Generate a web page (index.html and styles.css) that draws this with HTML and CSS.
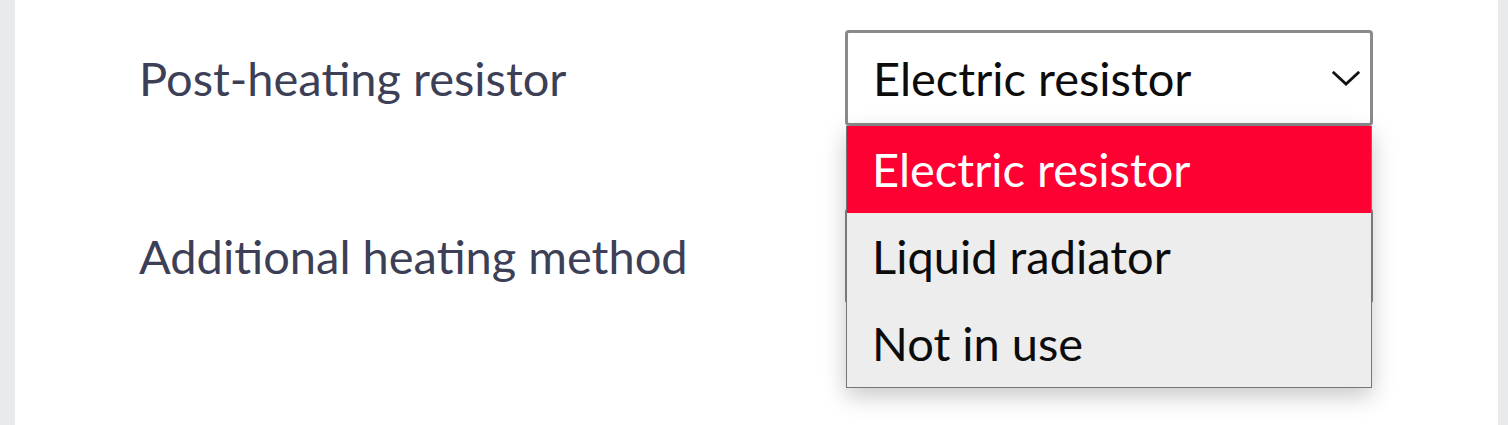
FILE: index.html
```html
<!DOCTYPE html>
<html lang="en">
<head>
<meta charset="utf-8">
<title>Heating settings</title>
<link rel="stylesheet" href="styles.css">
</head>
<body>
<div class="page">
  <div class="gutter gutter-left"></div>
  <main class="content">
    <div class="form">
      <div class="row">
        <div class="label">Post-heating resistor</div>
        <div class="field">
          <div class="select">
            <span class="select-value">Electric resistor</span>
            <svg class="chevron" width="28" height="15" viewBox="0 0 28 15"><path d="M1.8 1.8 L14 13 L26.2 1.8" fill="none" stroke="#111" stroke-width="2.8" stroke-linecap="square" stroke-linejoin="miter"/></svg>
          </div>
          <ul class="menu">
            <li class="option selected">Electric resistor</li>
            <li class="option">Liquid radiator</li>
            <li class="option">Not in use</li>
          </ul>
        </div>
      </div>
      <div class="row">
        <div class="label">Additional heating method</div>
        <div class="field">
          <div class="select">
            <span class="select-value">Liquid radiator</span>
            <svg class="chevron" width="28" height="15" viewBox="0 0 28 15"><path d="M1.8 1.8 L14 13 L26.2 1.8" fill="none" stroke="#111" stroke-width="2.8" stroke-linecap="square" stroke-linejoin="miter"/></svg>
          </div>
        </div>
      </div>
    </div>
  </main>
  <div class="gutter gutter-right"></div>
</div>
</body>
</html>
```
FILE: styles.css
```css
html, body {
  margin: 0;
  padding: 0;
  background: #ffffff;
}
body {
  font-family: "Lato", "Open Sans", sans-serif;
}
.page {
  display: flex;
  width: 1508px;
  height: 425px;
  overflow: hidden;
}
.gutter {
  background: #e9eaec;
  flex: none;
}
.gutter-left { width: 15px; }
.gutter-right { width: 10px; }
.content {
  flex: 1;
  background: #ffffff;
}
.form {
  display: flex;
  flex-direction: column;
  gap: 82px;
  padding: 30px 0 0 124px;
}
.row {
  display: grid;
  grid-template-columns: 706px 528px;
  align-items: center;
}
.label {
  font-size: 47px;
  color: #3d3f57;
  line-height: 96px;
}
.field {
  position: relative;
}
.select {
  box-sizing: border-box;
  height: 96px;
  border: 3px solid #8a8a8a;
  border-radius: 4px;
  background: #fff;
  display: flex;
  align-items: center;
  justify-content: space-between;
  padding: 0 10px 0 25px;
  font-size: 47px;
  color: #0c0c0c;
}
.select-value {
  line-height: 1;
}
.chevron {
  flex: none;
}
.menu {
  position: absolute;
  left: 1px;
  top: 96px;
  width: 526px;
  box-sizing: border-box;
  margin: 0;
  padding: 0;
  list-style: none;
  background: #ededed;
  border: 1.5px solid #767676;
  border-top: none;
  box-shadow: 0 8px 22px rgba(0, 0, 0, 0.22);
  z-index: 2;
}
.option {
  height: 87px;
  line-height: 87px;
  padding-left: 25px;
  font-size: 47px;
  color: #0c0c0c;
}
.option.selected {
  background: #ff0033;
  color: #fff;
}
```
